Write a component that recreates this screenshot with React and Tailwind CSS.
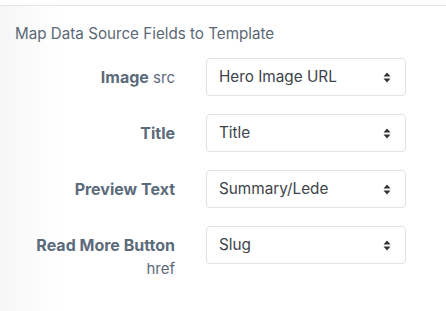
import React from "react";

const rows = [
   { label: "Image", extra: "src", inline: true, value: "Hero Image URL" },
   { label: "Title", value: "Title" },
   { label: "Preview Text", value: "Summary/Lede" },
   { label: "Read More Button", extra: "href", value: "Slug" },
];

function Arrows() {
   return (
      <svg width="8" height="11" viewBox="0 0 8 11" className="shrink-0">
         <path d="M4 0.5 L7.5 4.5 L0.5 4.5 Z" fill="#333" />
         <path d="M4 10.5 L7.5 6.5 L0.5 6.5 Z" fill="#333" />
      </svg>
   );
}

export default function App() {
   return (
      <div className="w-[446px] h-[311px] bg-white pt-[5px] font-['Inter',sans-serif] overflow-hidden">
         <div className="h-full border-t border-[#e4e4ea] bg-[linear-gradient(to_right,#f6f6f7,#ffffff_60px)] pl-[15px] pt-[17px]">
            <h3 className="text-[15.2px] leading-[22px] text-[#5b6875]">Map Data Source Fields to Template</h3>

            <div className="mt-[13px] flex flex-col gap-[18px]">
               {rows.map((r) => (
                  <div key={r.label} className="flex items-start">
                     <div className="w-[160px] pt-[7px] text-right text-[16px] leading-[24px] text-[#5c6b7b]">
                        <span className="font-bold">{r.label}</span>
                        {r.extra && r.inline && <span className="text-[15px]"> {r.extra}</span>}
                        {r.extra && !r.inline && <div className="text-[15px]">{r.extra}</div>}
                     </div>
                     <div className="ml-[31px] w-[200px] h-[38px] flex items-center justify-between rounded-[4px] border border-[#e0e2e8] bg-white pl-[12px] pr-[14px] text-[15.3px] text-[#3d4349]">
                        <span>{r.value}</span>
                        <Arrows />
                     </div>
                  </div>
               ))}
            </div>
         </div>
      </div>
   );
}
